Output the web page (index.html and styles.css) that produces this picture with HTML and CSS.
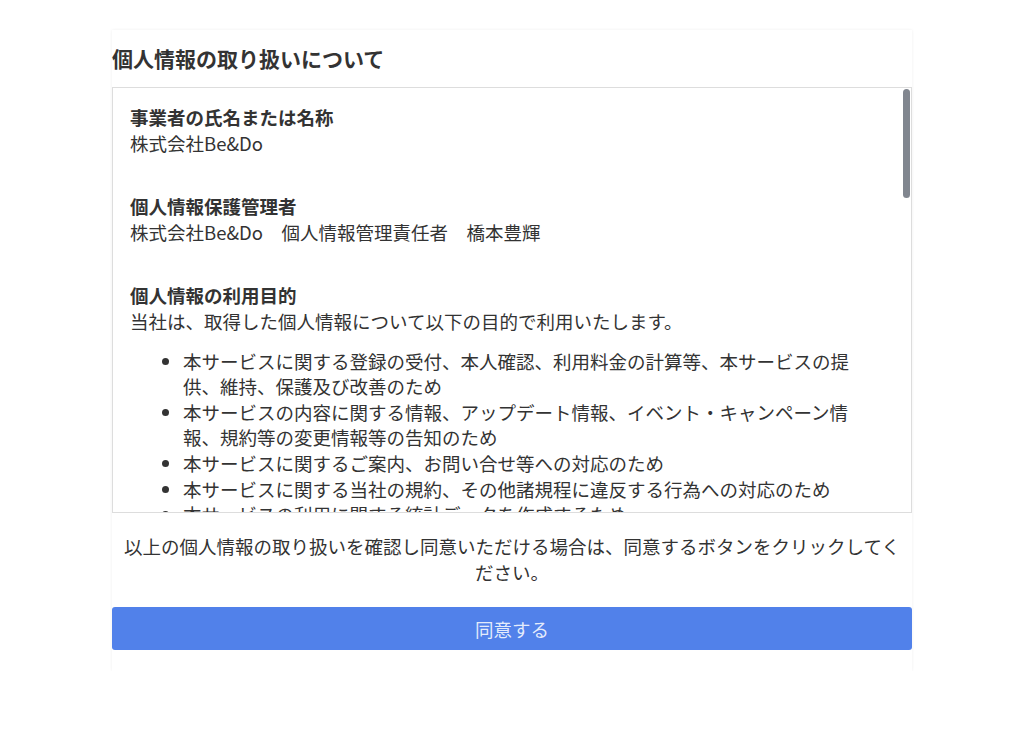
FILE: index.html
```html
<!DOCTYPE html>
<html lang="ja">
<head>
<meta charset="utf-8">
<title>個人情報の取り扱いについて</title>
<link rel="stylesheet" href="styles.css">
</head>
<body>
<div class="card">
  <h1 class="title">個人情報の取り扱いについて</h1>
  <div class="policy-wrap">
    <div class="policy">
      <section class="sec">
        <h2 class="sec-head">事業者の氏名または名称</h2>
        <p class="sec-text">株式会社Be&amp;Do</p>
      </section>
      <section class="sec">
        <h2 class="sec-head">個人情報保護管理者</h2>
        <p class="sec-text">株式会社Be&amp;Do　個人情報管理責任者　橋本豊輝</p>
      </section>
      <section class="sec">
        <h2 class="sec-head">個人情報の利用目的</h2>
        <p class="sec-text">当社は、取得した個人情報について以下の目的で利用いたします。</p>
        <ul class="list">
          <li>本サービスに関する登録の受付、本人確認、利用料金の計算等、本サービスの提供、維持、保護及び改善のため</li>
          <li>本サービスの内容に関する情報、アップデート情報、イベント・キャンペーン情報、規約等の変更情報等の告知のため</li>
          <li>本サービスに関するご案内、お問い合せ等への対応のため</li>
          <li>本サービスに関する当社の規約、その他諸規程に違反する行為への対応のため</li>
          <li>本サービスの利用に関する統計データを作成するため</li>
          <li>その他、上記利用目的に付随する目的のため</li>
        </ul>
      </section>
      <section class="sec">
        <h2 class="sec-head">個人情報の第三者提供について</h2>
        <p class="sec-text">当社は、法令に基づく場合を除き、ご本人の同意を得ることなく個人情報を第三者に提供いたしません。</p>
      </section>
      <section class="sec">
        <h2 class="sec-head">個人情報の取り扱いの委託について</h2>
        <p class="sec-text">当社は、利用目的の達成に必要な範囲内において、個人情報の取り扱いの全部または一部を委託する場合があります。この場合、当社は委託先に対して必要かつ適切な監督を行います。</p>
      </section>
      <section class="sec">
        <h2 class="sec-head">開示対象個人情報の開示等の請求について</h2>
        <p class="sec-text">ご本人から、開示対象個人情報の利用目的の通知、開示、内容の訂正、追加または削除、利用の停止、消去及び第三者への提供の停止の求めがあった場合には、ご本人であることを確認の上、遅滞なく対応いたします。</p>
      </section>
      <section class="sec">
        <h2 class="sec-head">個人情報を提供されることの任意性について</h2>
        <p class="sec-text">個人情報の提供は任意です。ただし、必要な項目をご提供いただけない場合、本サービスの一部または全部をご利用いただけないことがあります。</p>
      </section>
      <section class="sec">
        <h2 class="sec-head">お問い合わせ窓口</h2>
        <p class="sec-text">株式会社Be&amp;Do　個人情報お問い合わせ窓口</p>
      </section>
    </div>
    <div class="thumb"></div>
  </div>
  <p class="notice">以上の個人情報の取り扱いを確認し同意いただける場合は、同意するボタンをクリックしてください。</p>
  <button class="agree" type="button">同意する</button>
</div>
</body>
</html>
```
FILE: styles.css
```css
html, body {
  margin: 0;
  padding: 0;
  background: #ffffff;
}

body {
  font-family: "Noto Sans CJK JP", "Noto Sans", sans-serif;
  color: #333333;
}

.card {
  width: 800px;
  margin: 30px auto 0;
  padding: 14px 0 21px;
  background: #ffffff;
  box-shadow: 0 0 3px rgba(0, 0, 0, 0.07);
  box-sizing: border-box;
}

.title {
  margin: 0 0 15px;
  font-size: 21px;
  line-height: 28px;
  font-weight: 700;
  color: #333333;
}

.policy-wrap {
  position: relative;
}

.policy {
  height: 426px;
  box-sizing: border-box;
  overflow-y: auto;
  border: 1px solid #dddddd;
  padding: 17px 45px 10px 17px;
  font-size: 18.5px;
  line-height: 25.6px;
  scrollbar-width: none;
}

.policy::-webkit-scrollbar {
  display: none;
}

.thumb {
  position: absolute;
  top: 2px;
  right: 2px;
  width: 7px;
  height: 109px;
  border-radius: 4px;
  background: #81868f;
}

.sec {
  margin: 0 0 38px;
}

.sec-head {
  margin: 0;
  font-size: 18.5px;
  line-height: 25.6px;
  font-weight: 700;
}

.sec-text {
  margin: 0;
}

.list {
  margin: 14px 0 0;
  padding: 0 0 0 53px;
}

.notice {
  margin: 20px 8px 22px;
  font-size: 18.5px;
  line-height: 26px;
  text-align: center;
  color: #333333;
}

.agree {
  display: block;
  width: 100%;
  height: 43px;
  border: none;
  border-radius: 3px;
  background: #5181ea;
  color: rgba(255, 255, 255, 0.86);
  font-family: "Noto Sans CJK JP", "Noto Sans", sans-serif;
  font-size: 18.5px;
  cursor: pointer;
}
```
